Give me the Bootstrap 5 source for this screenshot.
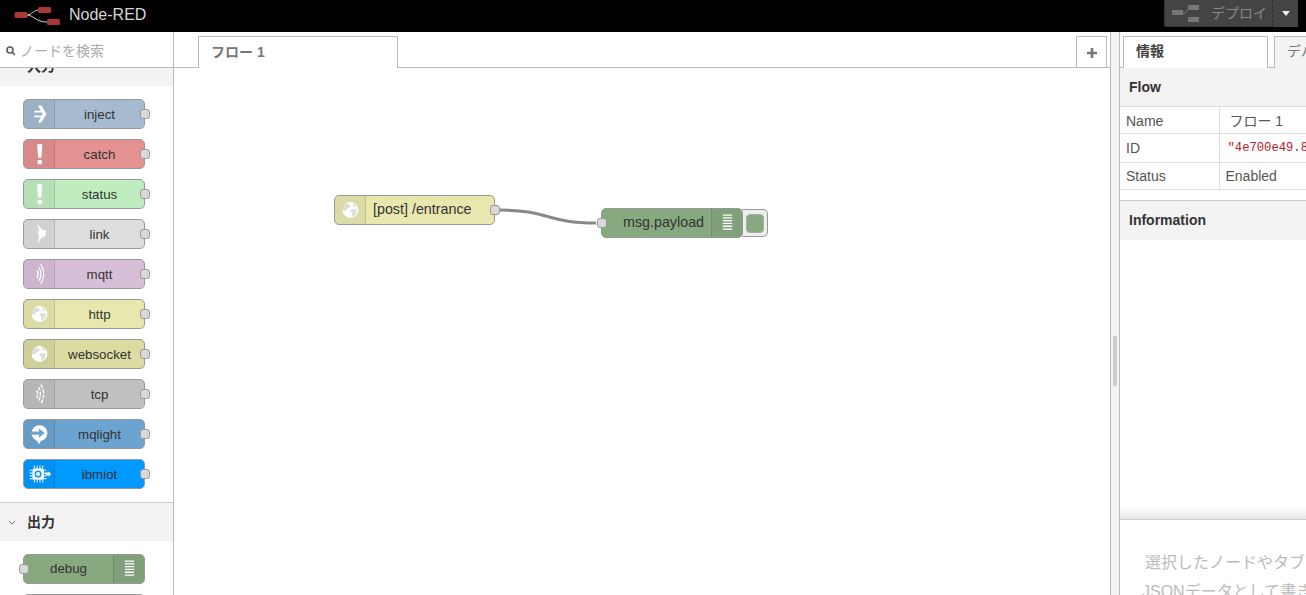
<!DOCTYPE html>
<html lang="ja">
<head>
<meta charset="utf-8">
<title>Node-RED</title>
<link rel="stylesheet" href="https://cdn.jsdelivr.net/npm/bootstrap@5.3.0/dist/css/bootstrap.min.css">
<style>
html,body{height:595px;overflow:hidden;}
body{font-family:"Liberation Sans","Noto Sans CJK JP",sans-serif;font-size:14px;color:#333;background:#fff;}
.nr-app{height:595px;overflow:hidden;}
.nr-head{height:32px;background:#000;flex:none;}
.nr-brand{color:#d6d6d6;font-size:16px;padding-left:14px;gap:8px;height:32px;padding-bottom:3px;}
.nr-deploy{width:134px;height:27px;margin-right:8px;background:#444;align-self:flex-start;}
.nr-deploy-main{width:109px;border:1px dashed #2c2c2c;border-top:0;padding-left:7px;gap:12px;color:#888;font-size:14px;}
.nr-deploy-caret{width:25px;}
.nr-body{flex:1;min-height:0;}
.nr-palette{width:174px;flex:none;border-right:1px solid #bbb;}
.nr-search{height:36px;border-bottom:1px solid #bbb;padding-left:6px;gap:4px;color:#aaa;font-size:14px;flex:none;padding-top:3px;}
.nr-scroll{flex:1;overflow:hidden;}
.nr-cat-cut{margin-top:-21px;}
.nr-cat{height:39px;background:#f3f3f3;font-weight:700;font-size:14px;color:#333;padding-left:8px;gap:11px;}
.nr-cat-top{border-top:1px solid #ccc;margin-top:13px;}
.nr-list{padding:13px 0 0 23px;}
.nr-pnode{width:122px;height:30px;margin-bottom:10px;border:1px solid #999;border-radius:5px;font-size:13.3px;color:#333;position:relative;}
.nr-pnode .nr-label{padding-top:1px;}
.nr-pnode.c-debug .nr-label{padding-top:0;}
.nr-icon{width:31px;flex:none;align-self:stretch;background:rgba(0,0,0,.05);border-right:1px solid rgba(0,0,0,.12);border-radius:4px 0 0 4px;}
.nr-icon-r{border-right:0;border-left:1px solid rgba(0,0,0,.12);border-radius:0 4px 4px 0;}
.nr-label{flex:1;text-align:center;}
.nr-port{position:absolute;width:10px;height:10px;background:#d9d9d9;border:1px solid #999;border-radius:3px;}
.nr-port-r{right:-6px;top:9px;}
.nr-port-l{left:-5px;top:9px;}
.c-inject{background:#a6bbcf;}.c-catch{background:#e49191;}.c-status{background:#c0edc0;}.c-link{background:#ddd;}
.c-mqtt{background:#d8bfd8;}.c-http{background:#e7e7ae;}.c-ws{background:#dbdba2;}.c-tcp{background:#c0c0c0;}
.c-mql{background:#6ba4d0;}.c-iot{background:#0099ff;}.c-debug{background:#87a980;}
.nr-main{flex:1;min-width:0;border-right:1px solid #bbb;}
.nr-tabs{height:36px;border-bottom:1px solid #bbb;flex:none;padding-top:4px;}
.nr-tab{height:32px;border:1px solid #bbb;border-bottom:0;background:#fff;margin-bottom:-1px;font-weight:700;font-size:14px;color:#777;}
.nr-flowtab{width:200px;margin-left:24px;padding-left:12px;}
.nr-add{width:31px;height:32px;border:1px solid #bbb;border-bottom:0;margin-right:3px;color:#777;}
.nr-canvas{flex:1;position:relative;overflow:hidden;}
.nr-wire{position:absolute;left:0;top:0;width:936px;height:520px;}
.nr-fnode{position:absolute;height:30px;border:1px solid #999;border-radius:5px;font-size:14.3px;color:#333;}
.nr-f1{left:160px;top:127px;width:161px;}
.nr-f2{left:427px;top:140px;width:142px;}
.nr-f1 .nr-label{text-align:left;padding-left:7px;}
.nr-f2 .nr-label{padding-left:14px;}
.nr-btn-out{position:absolute;left:568px;top:141px;width:26px;height:28px;border:1px solid #999;border-left:0;border-radius:0 5px 5px 0;background:#eee;}
.nr-btn-in{width:18px;height:19px;background:#87a980;border:1px solid #aaa;border-radius:4px;}
.nr-sep{width:8px;flex:none;background:#f3f3f3;}
.nr-handle{width:4px;height:50px;background:#ccc;margin-top:304px;}
.nr-side{width:187px;flex:none;border-left:1px solid #bbb;overflow:hidden;}
.nr-side-tabs{height:36px;border-bottom:1px solid #bbb;padding:4px 0 0 3px;gap:6px;flex:none;}
.nr-stab{height:32px;border:1px solid #bbb;border-bottom:0;font-weight:700;font-size:14px;color:#444;margin-bottom:-1px;background:#fff;white-space:nowrap;flex:none;padding-bottom:2px;}
.nr-stab-on{width:145px;padding-left:12px;}
.nr-stab-off{width:60px;padding-left:12px;background:#f3f3f3;color:#777;font-weight:400;}
.nr-shead{height:39px;background:#f3f3f3;font-weight:700;font-size:14px;color:#333;padding-left:9px;flex:none;}
.nr-shead-flow{border-bottom:1px solid #ddd;}
.nr-grid{width:100%;table-layout:fixed;font-size:14px;color:#555;border-collapse:collapse;flex:none;white-space:nowrap;}
.nr-grid td{border-bottom:1px solid #ddd;padding:2px 0 0 6px;overflow:hidden;}
.nr-grid td:first-child{width:99px;border-right:1px solid #ddd;}
.nr-r1{height:26px;}.nr-r2{height:29px;}.nr-r3{height:27px;}
.nr-grid .nr-r1 td{padding-top:4px;}
.nr-grid td.nr-id{font-family:"Liberation Mono",monospace;font-size:12.2px;color:#b5202a;padding-left:8px;}
.nr-gap{height:11px;border-bottom:1px solid #ccc;flex:none;}
.nr-blank{flex:1;background:linear-gradient(to bottom,#fff calc(100% - 14px),#e9e9e9);}
.nr-help{height:76px;border-top:1px solid #ccc;flex:none;padding:28px 0 0 25px;color:#bbb;font-size:16px;line-height:29px;white-space:nowrap;overflow:hidden;background:#fff;}
.nr-help-2{margin-left:-3px;}
</style>
</head>
<body>
<svg width="0" height="0" class="d-none">
<defs>
<symbol id="i-arrow" viewBox="0 0 31 30"><path d="M14 6h3.500l5.500 9-5.500 9H14l3-5.500h-7v-1.800h8.500v-3.400H10V11.500h7z" fill="#fff"/></symbol>
<symbol id="i-bang" viewBox="0 0 31 30"><path d="M13 4.500h5.500L17.500 19H14zM13.500 21.500h4.500V26h-4.500z" fill="#fff"/></symbol>
<symbol id="i-link" viewBox="0 0 31 30"><path d="M13 4l6 7 3.500 0 0 1.500-1 2 1.500 1-2 1 1 1.500-3 0-6 7 2.500-8.500-2.500.5v-5l2.500.5z" fill="#fff"/><circle cx="12.500" cy="15" r="2" fill="#d2d2d2"/></symbol>
<symbol id="i-wave" viewBox="0 0 31 30"><g fill="none" stroke="#fff" stroke-width="1.300" stroke-linecap="round"><path d="M13 11q2 4 0 8"/><path d="M15 8q4 7 0 14"/><path d="M17 5q6 10 0 20"/></g></symbol>
<symbol id="i-tcp" viewBox="0 0 31 30"><g fill="none" stroke="#fff" stroke-width="1.600" stroke-dasharray="4 1.500"><path d="M12.500 11q2 4 0 8"/><path d="M14.500 7.500q4 7.500 0 15"/><path d="M17 5q6 10 0 20"/></g></symbol>
<symbol id="i-globe" viewBox="0 0 31 30"><circle cx="15.500" cy="15" r="8.500" fill="#fff"/><path d="M12 7.800l4 2.200-1 2-3 1-2 3-3-1q.5-5 5-7.200zM17 14l5.500.5-1 5-3.500 3-1-4.500-2-1.500zM18.500 7.500l3.500 3.500-2 1-2-2z" fill="#000" opacity=".13"/></symbol>
<symbol id="i-mql" viewBox="0 0 31 30"><circle cx="15.500" cy="14" r="8.500" fill="#fff"/><path d="M12 21l5 2-2 3z" fill="#fff"/><path d="M7 12.300h8v-3.300l6 5-6 5v-3.300H7z" fill="#6ba4d0"/></symbol>
<symbol id="i-iot" viewBox="0 0 31 30"><g stroke="#fff" stroke-width="1.200"><path d="M10 6v18M13 6v18M16 6v18M19 6v18M5 11h18M5 14h18M5 17h18M5 20h18" opacity=".85"/></g><rect x="8" y="9" width="12" height="12" rx="2" fill="#fff"/><circle cx="14" cy="15" r="3" fill="none" stroke="#0099ff" stroke-width="1.500"/><path d="M22 13.500h3V12l3 3-3 3v-1.500h-3z" fill="#fff"/></symbol>
<symbol id="i-list" viewBox="0 0 31 30"><g stroke="#fff" stroke-width="1.400"><path d="M10.500 6.500h10M10.500 9.500h10M10.500 12.500h10M10.500 15.500h10M10.500 18.500h10M10.500 21.500h10"/></g></symbol>
<symbol id="i-chev" viewBox="0 0 10 6"><path d="M1 1l4 4 4-4" fill="none" stroke="#666" stroke-width="1.200"/></symbol>
</defs>
</svg>
<div class="nr-app d-flex flex-column">
  <header class="nr-head d-flex align-items-start justify-content-between">
    <div class="nr-brand d-flex align-items-center">
      <svg width="47" height="20" viewBox="0 0 47 20">
        <path d="M13 10c5 0 6-5 12-5M13 10c6 0 9 7 20 7" fill="none" stroke="#ccc" stroke-width="1"/>
        <rect x="0.500" y="7" width="13" height="6" rx="1.500" fill="#a83838"/>
        <rect x="24" y="2" width="13" height="6" rx="1.500" fill="#a83838"/>
        <rect x="33" y="14" width="13" height="6" rx="1.500" fill="#a83838"/>
      </svg>
      <span>Node-RED</span>
    </div>
    <div class="nr-deploy d-flex">
      <div class="nr-deploy-main d-flex align-items-center">
        <svg width="27" height="22" viewBox="0 0 27 22"><path d="M9 11h4l6-6" fill="none" stroke="#777" stroke-width="1"/><rect x="0" y="8" width="11" height="5" fill="#777"/><rect x="16" y="3" width="11" height="5" fill="#777"/><rect x="16" y="15" width="11" height="5" fill="#777"/></svg>
        <span>デプロイ</span>
      </div>
      <div class="nr-deploy-caret d-flex align-items-center justify-content-center">
        <svg width="10" height="6" viewBox="0 0 10 6"><path d="M1 0h8L5 5z" fill="#eee"/></svg>
      </div>
    </div>
  </header>
  <div class="nr-body d-flex">
    <aside class="nr-palette d-flex flex-column">
      <div class="nr-search d-flex align-items-center">
        <svg width="10" height="10" viewBox="0 0 10 10"><circle cx="4" cy="4" r="3" fill="none" stroke="#555" stroke-width="1.500"/><path d="M6 6l3 3" stroke="#555" stroke-width="1.500"/></svg>
        <span>ノードを検索</span>
      </div>
      <div class="nr-scroll">
        <div class="nr-cat nr-cat-cut d-flex align-items-center"><svg width="8" height="5"><use href="#i-chev"/></svg><span>入力</span></div>
        <div class="nr-list">
          <div class="nr-pnode c-inject d-flex align-items-center"><div class="nr-icon"><svg width="31" height="28"><use href="#i-arrow"/></svg></div><div class="nr-label">inject</div><i class="nr-port nr-port-r"></i></div>
          <div class="nr-pnode c-catch d-flex align-items-center"><div class="nr-icon"><svg width="31" height="28"><use href="#i-bang"/></svg></div><div class="nr-label">catch</div><i class="nr-port nr-port-r"></i></div>
          <div class="nr-pnode c-status d-flex align-items-center"><div class="nr-icon"><svg width="31" height="28"><use href="#i-bang"/></svg></div><div class="nr-label">status</div><i class="nr-port nr-port-r"></i></div>
          <div class="nr-pnode c-link d-flex align-items-center"><div class="nr-icon"><svg width="31" height="28"><use href="#i-link"/></svg></div><div class="nr-label">link</div><i class="nr-port nr-port-r"></i></div>
          <div class="nr-pnode c-mqtt d-flex align-items-center"><div class="nr-icon"><svg width="31" height="28"><use href="#i-wave"/></svg></div><div class="nr-label">mqtt</div><i class="nr-port nr-port-r"></i></div>
          <div class="nr-pnode c-http d-flex align-items-center"><div class="nr-icon"><svg width="31" height="28"><use href="#i-globe"/></svg></div><div class="nr-label">http</div><i class="nr-port nr-port-r"></i></div>
          <div class="nr-pnode c-ws d-flex align-items-center"><div class="nr-icon"><svg width="31" height="28"><use href="#i-globe"/></svg></div><div class="nr-label">websocket</div><i class="nr-port nr-port-r"></i></div>
          <div class="nr-pnode c-tcp d-flex align-items-center"><div class="nr-icon"><svg width="31" height="28"><use href="#i-tcp"/></svg></div><div class="nr-label">tcp</div><i class="nr-port nr-port-r"></i></div>
          <div class="nr-pnode c-mql d-flex align-items-center"><div class="nr-icon"><svg width="31" height="28"><use href="#i-mql"/></svg></div><div class="nr-label">mqlight</div><i class="nr-port nr-port-r"></i></div>
          <div class="nr-pnode c-iot d-flex align-items-center"><div class="nr-icon"><svg width="31" height="28"><use href="#i-iot"/></svg></div><div class="nr-label">ibmiot</div><i class="nr-port nr-port-r"></i></div>
        </div>
        <div class="nr-cat nr-cat-top d-flex align-items-center"><svg width="8" height="5"><use href="#i-chev"/></svg><span>出力</span></div>
        <div class="nr-list">
          <div class="nr-pnode c-debug d-flex align-items-center"><div class="nr-label">debug</div><div class="nr-icon nr-icon-r"><svg width="31" height="28"><use href="#i-list"/></svg></div><i class="nr-port nr-port-l"></i></div>
          <div class="nr-pnode d-flex align-items-center"></div>
        </div>
      </div>
    </aside>
    <main class="nr-main d-flex flex-column">
      <div class="nr-tabs d-flex justify-content-between">
        <div class="nr-tab nr-flowtab d-flex align-items-center">フロー 1</div>
        <div class="nr-add d-flex align-items-center justify-content-center"><svg width="12" height="12" viewBox="0 0 12 12"><path d="M6 1v10M1 6h10" stroke="#777" stroke-width="2.600"/></svg></div>
      </div>
      <div class="nr-canvas">
        <svg class="nr-wire" viewBox="0 0 936 520"><path d="M325 142C375 142 372 155 422 155" fill="none" stroke="#888" stroke-width="3"/></svg>
        <div class="nr-fnode nr-f1 c-http d-flex align-items-center"><div class="nr-icon"><svg width="31" height="28"><use href="#i-globe"/></svg></div><div class="nr-label">[post] /entrance</div><i class="nr-port nr-port-r"></i></div>
        <div class="nr-btn-out d-flex align-items-center justify-content-center"><div class="nr-btn-in"></div></div>
        <div class="nr-fnode nr-f2 c-debug d-flex align-items-center"><div class="nr-label">msg.payload</div><div class="nr-icon nr-icon-r"><svg width="31" height="28"><use href="#i-list"/></svg></div><i class="nr-port nr-port-l"></i></div>
      </div>
    </main>
    <div class="nr-sep d-flex justify-content-center"><div class="nr-handle"></div></div>
    <aside class="nr-side d-flex flex-column">
      <div class="nr-side-tabs d-flex">
        <div class="nr-stab nr-stab-on d-flex align-items-center">情報</div>
        <div class="nr-stab nr-stab-off d-flex align-items-center">デバッグ</div>
      </div>
      <div class="nr-shead nr-shead-flow d-flex align-items-center">Flow</div>
      <table class="nr-grid">
        <tr class="nr-r1"><td>Name</td><td>&nbsp;フロー 1</td></tr>
        <tr class="nr-r2"><td>ID</td><td class="nr-id">"4e700e49.8"</td></tr>
        <tr class="nr-r3"><td>Status</td><td>Enabled</td></tr>
      </table>
      <div class="nr-gap"></div>
      <div class="nr-shead d-flex align-items-center">Information</div>
      <div class="nr-blank"></div>
      <div class="nr-help">
        <div>選択したノードやタブの情報を表示します。</div>
        <div class="nr-help-2">JSONデータとして書き出すことができます。</div>
      </div>
    </aside>
  </div>
</div>
</body>
</html>
